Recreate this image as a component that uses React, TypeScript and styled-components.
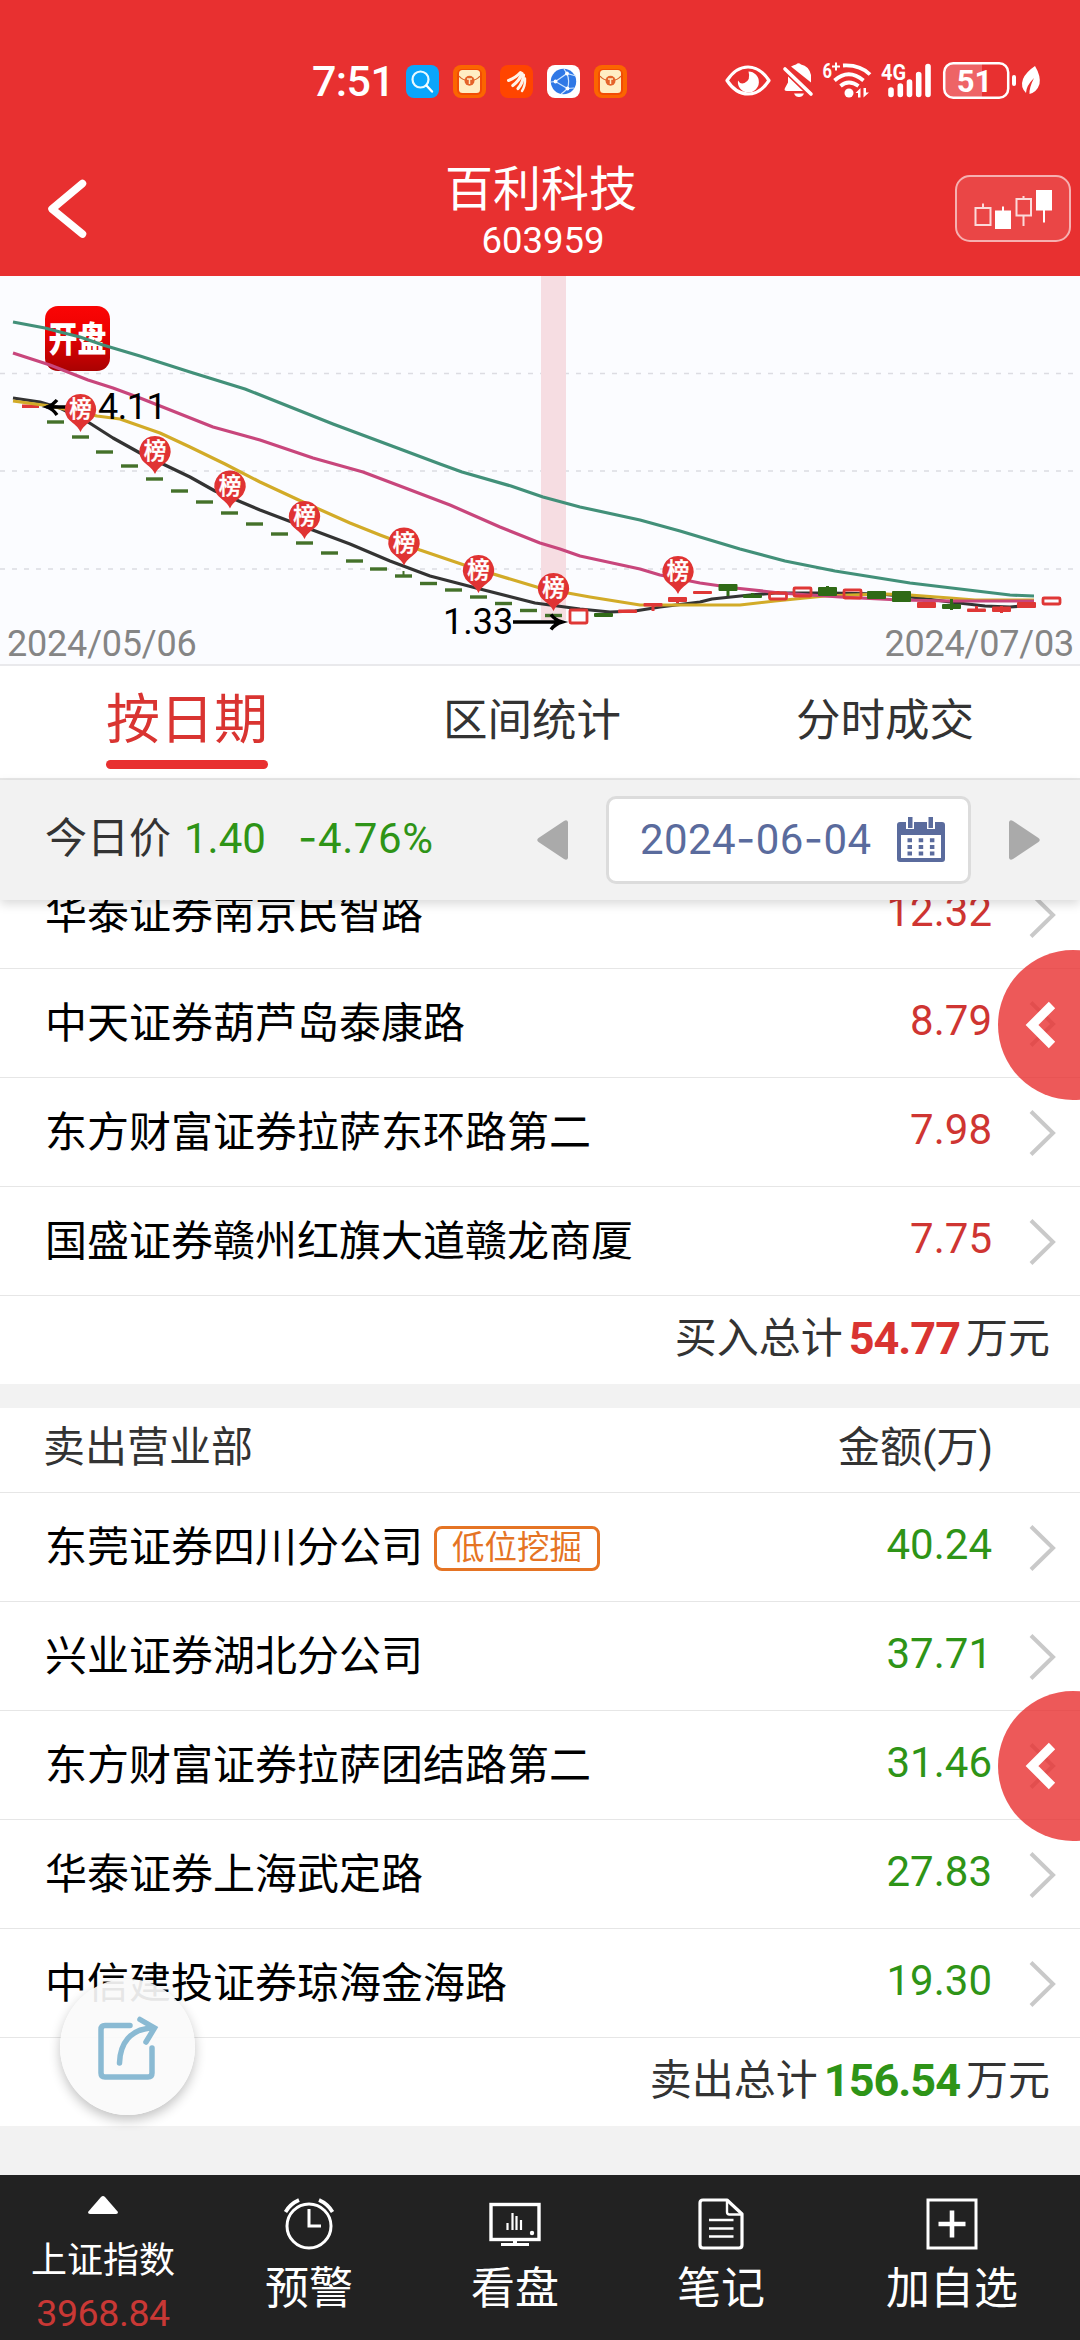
import React from "react";
import styled, { createGlobalStyle } from "styled-components";

const RED = "#e83030";
const GREEN = "#2e9417";

const GlobalStyle = createGlobalStyle`
  * { box-sizing: border-box; }
  body {
    margin: 0;
    background: #f2f2f2;
    font-family: Roboto, "Noto Sans CJK SC", sans-serif;
    -webkit-font-smoothing: antialiased;
  }
  svg { display: block; flex: none; overflow: visible; }
  svg text { font-family: Roboto, "Noto Sans CJK SC", sans-serif; }
`;

const Screen = styled.main`
  position: relative;
  width: 1080px;
  height: 2340px;
  overflow: hidden;
  display: flex;
  flex-direction: column;
`;

/* ---------- header ---------- */

const Header = styled.header`
  height: 276px;
  flex: none;
  background: ${RED};
  color: #fff;
`;

const StatusBar = styled.div`
  height: 160px;
  display: flex;
  align-items: center;
  justify-content: space-between;
  padding: 2px 40px 0 312px;
`;

const StatusGroup = styled.div<{ $gap: number }>`
  display: flex;
  align-items: center;
  gap: ${(p) => p.$gap}px;
`;

const Clock = styled.span`
  width: 80px;
  font-size: 43px;
  font-weight: 500;
  letter-spacing: -0.6px;
  line-height: 50px;
`;

const TitleBar = styled.div`
  height: 116px;
  display: grid;
  grid-template-columns: 140px 1fr 134px;
  align-items: start;
`;

const BackButton = styled.div`
  padding: 19px 0 0 46px;
`;

const TitleBlock = styled.div`
  display: flex;
  flex-direction: column;
  align-items: center;
  text-align: center;
`;

const StockName = styled.h1`
  margin: 0 4px 0 0;
  font-size: 48px;
  line-height: 60px;
  font-weight: 400;
`;

const StockCode = styled.div`
  font-size: 36.5px;
  line-height: 42px;
`;

const CandleButton = styled.div`
  width: 116px;
  height: 67px;
  margin: 15px 0 0 9px;
  border: 2px solid #f6b0b0;
  border-radius: 15px;
  background: #ea4646;
  display: flex;
  align-items: center;
  justify-content: center;
`;

/* ---------- chart ---------- */

const ChartPanel = styled.section`
  height: 390px;
  flex: none;
  background: #fbfcff;
  border-bottom: 2px solid #e9e9ec;
`;

const Plot = styled.svg`
  width: 1080px;
  height: 344px;
`;

const DateRange = styled.div`
  height: 44px;
  display: flex;
  justify-content: space-between;
  align-items: center;
  padding: 3px 6px 0 7px;
  font-size: 36px;
  line-height: 40px;
  letter-spacing: -0.2px;
  color: #858585;
`;

/* ---------- tabs ---------- */

const Tabs = styled.nav`
  height: 114px;
  flex: none;
  display: flex;
  gap: 175px;
  padding-left: 106px;
  background: #fff;
  border-bottom: 2px solid #e8e8e8;
`;

const Tab = styled.div<{ $active?: boolean }>`
  display: flex;
  flex-direction: column;
  align-items: center;
  padding-top: 21px;
  font-size: ${(p) => (p.$active ? 54 : 44.5)}px;
  line-height: 68px;
  color: ${(p) => (p.$active ? "#d93431" : "#333")};
  &::after {
    content: "";
    width: 100%;
    height: 9px;
    margin-top: 5px;
    border-radius: 5px;
    background: ${(p) => (p.$active ? RED : "transparent")};
  }
`;

/* ---------- price / date bar ---------- */

const PriceBar = styled.div`
  position: relative;
  z-index: 2;
  height: 120px;
  flex: none;
  display: flex;
  align-items: center;
  padding-left: 45px;
  background: #f2f2f2;
  box-shadow: 0 4px 10px rgba(0, 0, 0, 0.15);
  font-size: 42px;
  line-height: 50px;
`;

const PriceLabel = styled.span`
  width: 139px;
  padding-bottom: 2px;
  color: #333;
`;

const Price = styled.span<{ $width: number; $spacing?: number }>`
  width: ${(p) => p.$width}px;
  padding-bottom: 3px;
  letter-spacing: ${(p) => p.$spacing ?? 0}px;
  color: ${GREEN};
`;

const Dash = styled.span`
  font-family: Inter, sans-serif;
`;

const DateBox = styled.div`
  width: 365px;
  height: 88px;
  margin: 0 38px 0 38px;
  padding: 0 23px 0 31px;
  border: 3px solid #dcdcdc;
  border-radius: 10px;
  background: #fff;
  display: flex;
  align-items: center;
  justify-content: space-between;
  color: #5a6b9d;
  white-space: nowrap;
`;

const DateText = styled.span`
  letter-spacing: 0.4px;
  padding-bottom: 1px;
`;

/* ---------- broker list ---------- */

const ListViewport = styled.section`
  height: 1275px;
  flex: none;
  overflow: hidden;
`;

const BrokerSection = styled.div<{ $clipped?: boolean }>`
  background: #fff;
  margin-top: ${(p) => (p.$clipped ? -40 : 24)}px;
`;

const SectionHead = styled.div`
  height: 85px;
  display: flex;
  align-items: center;
  justify-content: space-between;
  padding: 0 87px 4px 43px;
  border-bottom: 1px solid #e6e6e6;
  font-size: 42px;
  line-height: 50px;
  color: #333;
`;

const Row = styled.div`
  height: 109px;
  display: flex;
  align-items: center;
  padding: 2px 24px 0 45px;
  border-bottom: 1px solid #e6e6e6;
  font-size: 42px;
  line-height: 50px;
  color: #000;
`;

const Broker = styled.span`
  padding-bottom: 1px;
  white-space: nowrap;
`;

const Tag = styled.span`
  height: 45px;
  margin-left: 11px;
  padding: 0 15px;
  border: 3px solid #e57424;
  border-radius: 8px;
  color: #e57424;
  font-size: 32.5px;
  line-height: 38px;
`;

const Amount = styled.span<{ $color: string }>`
  margin-left: auto;
  margin-right: 37px;
  padding-bottom: 7px;
  color: ${(p) => p.$color};
`;

const Total = styled.div<{ $color: string }>`
  height: 88px;
  display: flex;
  align-items: center;
  justify-content: flex-end;
  gap: 6px;
  padding: 0 30px 2px 0;
  font-size: 42px;
  line-height: 50px;
  color: #333;
  b {
    font-size: 45px;
    color: ${(p) => p.$color};
    letter-spacing: -1px;
  }
`;

/* ---------- floating buttons ---------- */

const SideHandle = styled.div<{ $top: number }>`
  position: absolute;
  z-index: 3;
  left: 998px;
  top: ${(p) => p.$top}px;
  width: 150px;
  height: 150px;
  padding: 50px 0 0 27px;
  border-radius: 50%;
  background: rgba(232, 48, 48, 0.8);
`;

const ShareButton = styled.div`
  position: absolute;
  z-index: 3;
  left: 60px;
  top: 1979px;
  width: 135px;
  height: 136px;
  border-radius: 50%;
  background: rgba(250, 250, 250, 0.92);
  box-shadow: 0 5px 12px rgba(0, 0, 0, 0.24);
  padding: 35px 0 0 36px;
`;

/* ---------- bottom bar ---------- */

const BottomBar = styled.footer`
  height: 165px;
  flex: none;
  background: #222;
  color: #fff;
  display: grid;
  grid-template-columns: 206px 206px 206px 206px 256px;
`;

const NavItem = styled.div`
  display: flex;
  flex-direction: column;
  align-items: center;
  padding-top: 23px;
  font-size: 44px;
  line-height: 56px;
  gap: 11px;
`;

const IndexItem = styled.div`
  display: flex;
  flex-direction: column;
  align-items: center;
  padding-top: 21px;
`;

const IndexName = styled.span`
  margin-top: 24px;
  font-size: 36px;
  line-height: 46px;
`;

const IndexValue = styled.span`
  margin-top: 7px;
  font-size: 37.5px;
  line-height: 44px;
  letter-spacing: -0.4px;
  color: #c93835;
`;

/* ---------- data ---------- */

type BrokerRow = { name: string; amount: string; tag?: string };

const buyers: BrokerRow[] = [
  { name: "华泰证券南京民智路", amount: "12.32" },
  { name: "中天证券葫芦岛泰康路", amount: "8.79" },
  { name: "东方财富证券拉萨东环路第二", amount: "7.98" },
  { name: "国盛证券赣州红旗大道赣龙商厦", amount: "7.75" },
];

const sellers: BrokerRow[] = [
  { name: "东莞证券四川分公司", amount: "40.24", tag: "低位挖掘" },
  { name: "兴业证券湖北分公司", amount: "37.71" },
  { name: "东方财富证券拉萨团结路第二", amount: "31.46" },
  { name: "华泰证券上海武定路", amount: "27.83" },
  { name: "中信建投证券琼海金海路", amount: "19.30" },
];

const averages = [
  { color: "#333", points: "13,398 40,402 60,408 88,422 113,438 140,453 190,477 215,491 260,510 310,529 350,544 390,561 430,576 480,589 535,603 580,609 610,612 635,611 660,607 700,602 712,599 750,595 775,593 830,593 880,594 920,598 950,602 985,606 1010,607 1034,605" },
  { color: "#d2ab28", points: "13,401 50,406 97,416 120,419 160,433 190,447 225,464 260,482 303,502 350,523 380,535 420,550 470,567 540,588 590,597 640,605 680,605 740,605 775,601 825,596 850,595 885,594 910,595 950,598 975,600 1034,600" },
  { color: "#c8467c", points: "13,353 50,365 88,380 113,388 140,398 213,427 260,440 313,458 363,472 400,486 450,505 500,527 540,543 560,549 580,556 640,569 660,575 700,583 735,588 780,593 840,597 900,600 950,601 1034,601" },
  { color: "#429079", points: "13,322 45,328 60,332 80,337 103,345 140,356 190,372 245,389 333,424 400,449 440,464 462,472 511,486 543,497 580,507 640,520 680,531 740,549 785,561 835,571 910,583 1010,595 1034,596" },
];

const limitDays: [number, number][] = [
  [55.5, 422], [80.5, 437], [104.5, 452], [129.5, 466], [154.5, 479], [179.5, 491],
  [204.5, 502], [229.5, 513], [254.5, 524], [279.5, 534], [304.5, 543], [329.5, 553],
  [354.5, 561], [378.5, 569], [403.5, 576], [428.5, 583.5], [453.5, 590], [478.5, 597],
  [503.5, 603.5], [528.5, 610.5], [553.5, 615.5],
];

type Candle = { x: number; top: number; bottom: number; color: "r" | "g"; hollow?: boolean; wick?: [number, number] };

const candles: Candle[] = [
  { x: 578.5, top: 609, bottom: 624, color: "r", hollow: true },
  { x: 603.5, top: 613, bottom: 617, color: "g" },
  { x: 627.5, top: 609.5, bottom: 613, color: "r" },
  { x: 653, top: 603, bottom: 606.5, color: "r", wick: [603, 611] },
  { x: 677.5, top: 597, bottom: 602, color: "r", wick: [597, 603] },
  { x: 702.5, top: 591, bottom: 594, color: "r" },
  { x: 728, top: 584, bottom: 591, color: "g", wick: [584, 596] },
  { x: 752.5, top: 594.5, bottom: 598, color: "g", wick: [593, 598] },
  { x: 778, top: 592, bottom: 600, color: "r", hollow: true, wick: [591, 593] },
  { x: 802.5, top: 587, bottom: 597, color: "r", hollow: true },
  { x: 827.5, top: 587, bottom: 596, color: "g", wick: [586, 596] },
  { x: 852.5, top: 589, bottom: 599, color: "r", hollow: true },
  { x: 876.5, top: 591, bottom: 599, color: "g" },
  { x: 901.5, top: 591, bottom: 602, color: "g" },
  { x: 926.5, top: 602, bottom: 608, color: "r" },
  { x: 951.5, top: 604, bottom: 609, color: "g", wick: [599, 610] },
  { x: 976.5, top: 608.5, bottom: 612, color: "r", wick: [606, 612] },
  { x: 1001.5, top: 606.5, bottom: 612, color: "r", wick: [606, 613] },
  { x: 1026.5, top: 602, bottom: 608, color: "r" },
  { x: 1051.5, top: 597, bottom: 605, color: "r", hollow: true },
];

const pins: [number, number][] = [
  [80.5, 394], [155, 436], [230, 470.5], [304.5, 501], [404, 527.5], [478.5, 555], [553.5, 573], [678, 556],
];

const paint = { r: "#df3736", g: "#2f6a16" };

/* ---------- drawings ---------- */

const Chart = () => (
  <Plot viewBox="0 276 1080 344">
    <defs>
      <linearGradient id="badge" x1="0" y1="0" x2="0" y2="1">
        <stop offset="0" stopColor="#fa0505" />
        <stop offset="0.35" stopColor="#f00202" />
        <stop offset="1" stopColor="#a90202" />
      </linearGradient>
    </defs>
    {[373.5, 471, 569].map((y) => (
      <path key={y} d={`M0 ${y}H1080`} stroke="#dcdce2" strokeWidth="1.5" strokeDasharray="5 7" />
    ))}
    <rect x="541" y="276" width="25" height="344" fill="#f6dde2" />
    <rect x="45" y="306" width="65" height="65" rx="13" fill="url(#badge)" />
    <text
      transform="translate(77.5 352) scale(1 1.22)"
      fontSize="29"
      fontWeight="900"
      fill="#fff"
      textAnchor="middle"
    >
      开盘
    </text>
    <rect x="22" y="404.5" width="17" height="3.5" fill={paint.r} />
    {limitDays.map(([x, y]) => (
      <rect key={x} x={x - 8.5} y={y - 1.7} width="17" height="3.4" fill="#44712a" />
    ))}
    <path d="M403.5 571V576" stroke="#44712a" strokeWidth="2" />
    {averages.map((a) => (
      <polyline key={a.color} points={a.points} fill="none" stroke={a.color} strokeWidth="3.2" strokeLinejoin="round" />
    ))}
    {candles.map((c) => (
      <g key={c.x}>
        {c.wick && <path d={`M${c.x} ${c.wick[0]}V${c.wick[1]}`} stroke={paint[c.color]} strokeWidth="3" />}
        <rect
          x={c.x - (c.hollow ? 8.5 : 9.5)}
          y={c.top + (c.hollow ? 1 : 0)}
          width={c.hollow ? 17 : 19}
          height={c.bottom - c.top - (c.hollow ? 2 : 0)}
          rx="1"
          fill={c.hollow ? "none" : paint[c.color]}
          stroke={c.hollow ? paint.r : "none"}
          strokeWidth="2.8"
        />
      </g>
    ))}
    <path d="M46 407H68M57 400Q53 405 47 407Q53 409 57 415" fill="none" stroke="#000" strokeWidth="3.4" />
    <path d="M513 622H560M551 614.5Q555 620 562 622Q555 624 551 629.5" fill="none" stroke="#000" strokeWidth="3.4" />
    <text x="98" y="419" fontSize="36" letterSpacing="-0.5" fill="#000">4.11</text>
    <text x="443" y="634" fontSize="36" fill="#000">1.33</text>
    {pins.map(([x, y]) => (
      <g key={x}>
        <path d={`M${x} ${y}a15.5 15.5 0 0 1 13 24C${x + 8} ${y + 30} ${x + 4} ${y + 30} ${x} ${y + 38}C${x - 4} ${y + 30} ${x - 8} ${y + 30} ${x - 13} ${y + 24}a15.5 15.5 0 0 1 13 -24Z`} fill="#e03333" />
        <text x={x} y={y + 23} fontSize="22.5" fontWeight="500" fill="#fff" stroke="#fff" strokeWidth="0.4" textAnchor="middle">榜</text>
      </g>
    ))}
  </Plot>
);

const SearchApp = () => (
  <svg width="33" height="33" viewBox="0 0 33 33">
    <rect width="33" height="33" rx="8" fill="#0aa5fb" />
    <circle cx="14.5" cy="14.5" r="8" fill="none" stroke="#e8faff" strokeWidth="2.2" />
    <path d="M20.5 20.5L26 26.5" stroke="#fff" strokeWidth="2.4" strokeLinecap="round" />
  </svg>
);

const EnvelopeApp = () => (
  <svg width="33" height="33" viewBox="0 0 33 33">
    <rect width="33" height="33" rx="8" fill="#fb6500" />
    <rect x="4" y="4" width="25" height="26" rx="5" fill="#f24b05" />
    <rect x="6" y="5" width="21" height="23" rx="3.5" fill="#ffedc4" />
    <path d="M6 11Q9 15.5 16.5 15.5T27 11" fill="none" stroke="#d9622a" strokeWidth="1.3" />
    <circle cx="16.5" cy="15.8" r="5" fill="#e4632a" />
    <path d="M14 14H19M16.5 14V19" stroke="#ffe9c0" strokeWidth="1.5" />
  </svg>
);

const ShellApp = () => (
  <svg width="33" height="33" viewBox="0 0 33 33">
    <rect width="33" height="33" rx="8" fill="#ff4500" />
    <g fill="none" stroke="#fff3e8" strokeLinecap="round">
      <path d="M20.500 7.500Q16 12.500 8.500 15.500" strokeWidth="3" />
      <path d="M22 8.500Q19.500 15.500 12.800 20.500" strokeWidth="3.200" />
      <path d="M23.500 10Q23 18 18 23.500" strokeWidth="3.200" />
      <path d="M25 13.500Q25.500 20.500 22 26" strokeWidth="2.400" />
    </g>
  </svg>
);

const GlobeApp = () => (
  <svg width="33" height="33" viewBox="0 0 33 33">
    <rect width="33" height="33" rx="8" fill="#fff" />
    <circle cx="16.500" cy="16.500" r="12.700" fill="#2f78e6" />
    <g fill="none" stroke="#cfe6ff" strokeWidth="1.200">
      <path d="M8.500 16.500L20 8.500L29 11M20 8.500Q23 16 20.500 23.500L8.500 16.500L4 17M20.500 23.500Q17 27 14 29M20.500 23.500L27 23M20 8.500L17 4" />
    </g>
    <g fill="#fff">
      <circle cx="8.500" cy="16.500" r="1.900" />
      <circle cx="20" cy="8.500" r="1.900" />
      <circle cx="20.500" cy="23.500" r="1.900" />
    </g>
  </svg>
);

const StatusIcons = () => (
  <svg width="316" height="38" viewBox="724 62 316 38" fill="none">
    <path d="M727 80.500Q736 67 748 67T769 80.500Q760 94 748 94T727 80.500Z" stroke="#fff" strokeWidth="3.200" strokeLinejoin="round" />
    <path d="M748.500 71.500A10.500 10.500 0 1 1 738 80.500Q740 84.500 744.500 83Q751 80 748.500 71.500Z" fill="#fff" />
    <path d="M787 91Q783.500 91 785 88L788 82.500V76.500L803 91ZM791 66.500Q794 65 796 64.500Q798.500 62 801 64.500Q809 66 811 75V82.500ZM794 93.500H804Q802.500 97 799 97T794 93.500Z" fill="#fff" />
    <path d="M785 69L811 94" stroke="#fff" strokeWidth="3.600" strokeLinecap="round" />
    <text x="822.500" y="78" fontSize="20" fontWeight="700" fill="#fff" textLength="9.500" lengthAdjust="spacingAndGlyphs">6</text>
    <path d="M832 66.500H840M836 62.500V70.500" stroke="#fff" strokeWidth="2" />
    <g stroke="#fff" strokeWidth="3.800">
      <path d="M843 65.500Q860 64.500 870 74.500" />
      <path d="M834.500 80.500Q848.500 68 863.500 80.500" />
      <path d="M840.500 86Q848.500 79 858.500 86" />
    </g>
    <circle cx="849" cy="93" r="4.500" fill="#fff" />
    <path d="M855.500 93L860.500 88V97.500H858V93ZM869 92.500L863.500 97.500V88H866V92.500Z" fill="#fff" />
    <text x="881" y="80" fontSize="22" fontWeight="700" fill="#fff" textLength="25" lengthAdjust="spacingAndGlyphs">4G</text>
    <g stroke="#fff" strokeWidth="5.600" strokeLinecap="round">
      <path d="M891 90V94.500M900.300 86V94.500M909.500 82V94.500M918.700 74.500V94.500M928 66.500V94.500" />
    </g>
    <path d="M953 63.500H982V97.500H953Q945 97.500 945 89V72Q945 63.500 953 63.500Z" fill="#ee6466" />
    <rect x="944.200" y="63.200" width="64" height="34.600" rx="9" stroke="#fff" strokeWidth="2.500" />
    <text x="974.500" y="92" fontSize="31" fontWeight="700" fill="#fff" textAnchor="middle">51</text>
    <path d="M1014 77V84" stroke="#fff" strokeWidth="4" strokeLinecap="round" />
    <path d="M1035 66Q1041 76 1039.500 84Q1037 92 1029.500 94Q1029 88 1034 78Q1026 86 1026 93Q1020 87 1023 79Q1026 72 1035 66Z" fill="#fff" />
  </svg>
);

const CandleIcon = () => (
  <svg width="80" height="40" viewBox="0 0 80 40" fill="none" stroke="#fff" strokeWidth="2">
    <path d="M10 14.500V19M2.500 19H17.500V36H2.500Z" stroke="#fbdada" />
    <path d="M30 17.500V22" />
    <rect x="22" y="21.500" width="16" height="18.500" fill="#fff" stroke="none" />
    <path d="M50.500 7V10M43.500 10H58V26.500H43.500ZM50.500 26.500V37" stroke="#fbdada" />
    <path d="M71 20V33.500" />
    <rect x="63" y="1" width="16" height="20.500" fill="#fff" stroke="none" />
  </svg>
);

const Chevron = () => (
  <svg width="27" height="46" viewBox="0 0 27 46">
    <path d="M2 1.500L24 23L2 44.500" fill="none" stroke="#c9c9c9" strokeWidth="4" />
  </svg>
);

const HandleChevron = () => (
  <svg width="32" height="50" viewBox="0 0 32 50">
    <path d="M27 5L7 25L27 45" fill="none" stroke="#fff" strokeWidth="9" />
  </svg>
);

const Arrow = ({ flip }: { flip?: boolean }) => (
  <svg width="31" height="42" viewBox="0 0 31 42">
    <path
      d={flip ? "M0 3Q1 0 4 2L29.500 19Q32 21 29.500 23L4 40Q1 42 0 39Z" : "M31 3Q30 0 27 2L1.500 19Q-1 21 1.500 23L27 40Q30 42 31 39Z"}
      fill="#aaa"
    />
  </svg>
);

const CalendarIcon = () => (
  <svg width="48" height="46" viewBox="0 0 48 46">
    <path d="M3 5H9V12H17V5H30V12H38V5H45Q48 5 48 8V42Q48 45 45 45H3Q0 45 0 42V8Q0 5 3 5Z" fill="#5a6b9d" />
    <rect x="4" y="18" width="40" height="23" fill="#fff" />
    <path d="M11 0H15.500V11H11ZM31.500 0H36V11H31.500Z" fill="#5a6b9d" />
    <path d="M10.500 23.300H39M10.500 30H39M10.500 36.500H39" stroke="#5a6b9d" strokeWidth="4" strokeDasharray="4.500 6.700" />
  </svg>
);

const ShareIcon = () => (
  <svg width="64" height="68" viewBox="0 0 64 68" fill="none" stroke="#8abad3" strokeWidth="5.500" strokeLinecap="round">
    <path d="M34 11.500H9Q5 11.500 5 15.500V59Q5 63 9 63H52Q56 63 56 59V34" />
    <path d="M23.500 49C24 30 34 14.500 57 14M44 5.500L58.500 14L50 28" />
  </svg>
);

const AlarmIcon = () => (
  <svg width="50" height="52" viewBox="0 0 50 52" fill="none" stroke="#fff" strokeWidth="3">
    <circle cx="25" cy="28" r="22" />
    <path d="M25 11V28H37" />
    <path d="M1.500 14Q6 6 15 2M48.500 14Q44 6 35 2" strokeWidth="3.600" />
  </svg>
);

const MonitorIcon = () => (
  <svg width="52" height="52" viewBox="0 0 52 52" fill="none" stroke="#fff">
    <rect x="2" y="6.500" width="48" height="35" strokeWidth="3.400" />
    <path d="M26 42V46" strokeWidth="4" />
    <path d="M12 46.500H40" strokeWidth="3" />
    <path d="M18.500 25V32M23.500 15V32M27.500 18V32M32 22V32" strokeWidth="2.200" />
    <circle cx="43" cy="35" r="2.200" fill="#fff" stroke="none" />
  </svg>
);

const NoteIcon = () => (
  <svg width="46" height="52" viewBox="0 0 46 52" fill="none" stroke="#fff" strokeWidth="3.200" strokeLinejoin="round">
    <path d="M5 2H29L44 16V47Q44 50 41 50H5Q2 50 2 47V5Q2 2 5 2Z" />
    <path d="M29 2V14Q29 16.500 31.500 16.500H44" strokeWidth="2.400" />
    <path d="M11 22H35.500M11 30.500H35.500M11 38.500H35.500" strokeWidth="2.400" />
  </svg>
);

const AddIcon = () => (
  <svg width="52" height="52" viewBox="0 0 52 52" fill="none" stroke="#fff">
    <rect x="2" y="2" width="48" height="48" strokeWidth="3" />
    <path d="M12.500 26H39.500M26 12.500V39.500" strokeWidth="4.600" />
  </svg>
);

const BrokerRows = ({ rows, color }: { rows: BrokerRow[]; color: string }) => (
  <>
    {rows.map((r) => (
      <Row key={r.name}>
        <Broker>{r.name}</Broker>
        {r.tag && <Tag>{r.tag}</Tag>}
        <Amount $color={color}>{r.amount}</Amount>
        <Chevron />
      </Row>
    ))}
  </>
);

export default function App() {
  return (
    <Screen>
      <GlobalStyle />
      <Header>
        <StatusBar>
          <StatusGroup $gap={14}>
            <Clock>7:51</Clock>
            <SearchApp />
            <EnvelopeApp />
            <ShellApp />
            <GlobeApp />
            <EnvelopeApp />
          </StatusGroup>
          <StatusIcons />
        </StatusBar>
        <TitleBar>
          <BackButton>
            <svg width="42" height="60" viewBox="0 0 42 60">
              <path d="M36.500 4.500L6 30L36.500 55" fill="none" stroke="#fff" strokeWidth="7.500" strokeLinecap="round" strokeLinejoin="round" />
            </svg>
          </BackButton>
          <TitleBlock>
            <StockName>百利科技</StockName>
            <StockCode>603959</StockCode>
          </TitleBlock>
          <CandleButton>
            <CandleIcon />
          </CandleButton>
        </TitleBar>
      </Header>

      <ChartPanel>
        <Chart />
        <DateRange>
          <span>2024/05/06</span>
          <span>2024/07/03</span>
        </DateRange>
      </ChartPanel>

      <Tabs>
        <Tab $active>按日期</Tab>
        <Tab>区间统计</Tab>
        <Tab>分时成交</Tab>
      </Tabs>

      <PriceBar>
        <PriceLabel>今日价</PriceLabel>
        <Price $width={114}>1.40</Price>
        <Price $width={239} $spacing={0.6}>
          <Dash>-</Dash>4.76%
        </Price>
        <Arrow />
        <DateBox>
          <DateText>
            2024<Dash>-</Dash>06<Dash>-</Dash>04
          </DateText>
          <CalendarIcon />
        </DateBox>
        <Arrow flip />
      </PriceBar>

      <ListViewport>
        <BrokerSection $clipped>
          <BrokerRows rows={buyers} color="#cf3532" />
          <Total $color="#d93431">
            买入总计<b>54.77</b>万元
          </Total>
        </BrokerSection>
        <BrokerSection>
          <SectionHead>
            <span>卖出营业部</span>
            <span>金额(万)</span>
          </SectionHead>
          <BrokerRows rows={sellers} color={GREEN} />
          <Total $color={GREEN}>
            卖出总计<b>156.54</b>万元
          </Total>
        </BrokerSection>
      </ListViewport>

      <SideHandle $top={950}>
        <HandleChevron />
      </SideHandle>
      <SideHandle $top={1691}>
        <HandleChevron />
      </SideHandle>
      <ShareButton>
        <ShareIcon />
      </ShareButton>

      <BottomBar>
        <IndexItem>
          <svg width="30" height="18" viewBox="0 0 30 18">
            <path d="M13 1Q15 -1 17 1L30 16Q30 18 28 18H2Q0 18 0 16Z" fill="#fff" />
          </svg>
          <IndexName>上证指数</IndexName>
          <IndexValue>3968.84</IndexValue>
        </IndexItem>
        <NavItem>
          <AlarmIcon />
          预警
        </NavItem>
        <NavItem>
          <MonitorIcon />
          看盘
        </NavItem>
        <NavItem>
          <NoteIcon />
          笔记
        </NavItem>
        <NavItem>
          <AddIcon />
          加自选
        </NavItem>
      </BottomBar>
    </Screen>
  );
}
